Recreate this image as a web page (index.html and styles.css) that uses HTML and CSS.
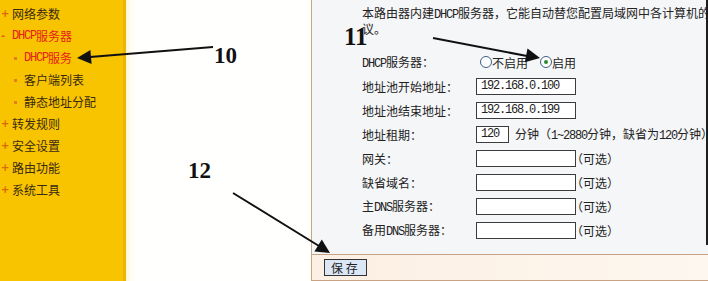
FILE: index.html
```html
<!DOCTYPE html>
<html lang="zh-CN">
<head>
<meta charset="utf-8">
<title>DHCP服务</title>
<link rel="stylesheet" href="styles.css">
</head>
<body>
<div class="page">
  <nav class="sidebar">
    <ul class="menu">
      <li class="item"><span class="mark">+</span>网络参数</li>
      <li class="item red"><span class="mark">-</span><span class="lat">DHCP</span>服务器</li>
      <li class="sub red"><span class="dot"></span><span class="lat">DHCP</span>服务</li>
      <li class="sub"><span class="dot"></span>客户端列表</li>
      <li class="sub"><span class="dot"></span>静态地址分配</li>
      <li class="item"><span class="mark">+</span>转发规则</li>
      <li class="item"><span class="mark">+</span>安全设置</li>
      <li class="item"><span class="mark">+</span>路由功能</li>
      <li class="item"><span class="mark">+</span>系统工具</li>
    </ul>
  </nav>
  <div class="blank"></div>
  <main class="panel">
    <div class="content">
      <div class="intro">
        <div class="line">本路由器内建<span class="lat">DHCP</span>服务器，它能自动替您配置局域网中各计算机的<span class="lat">TCP/IP</span>协</div>
        <div class="line">议。</div>
      </div>
      <div class="form">
        <div class="row">
          <span class="label"><span class="lat">DHCP</span>服务器：</span>
          <span class="radios">
            <span class="radio"></span><span class="rtext">不启用</span>
            <span class="radio checked"></span><span class="rtext">启用</span>
          </span>
        </div>
        <div class="row">
          <span class="label">地址池开始地址：</span>
          <span class="input">192.168.0.100</span>
        </div>
        <div class="row">
          <span class="label">地址池结束地址：</span>
          <span class="input">192.168.0.199</span>
        </div>
        <div class="row">
          <span class="label">地址租期：</span>
          <span class="input short">120</span>
          <span class="note">分钟（<span class="lat">1~2880</span>分钟，缺省为<span class="lat">120</span>分钟）</span>
        </div>
        <div class="row">
          <span class="label">网关：</span>
          <span class="input"></span>
          <span class="opt">（可选）</span>
        </div>
        <div class="row">
          <span class="label">缺省域名：</span>
          <span class="input"></span>
          <span class="opt">（可选）</span>
        </div>
        <div class="row">
          <span class="label">主<span class="lat">DNS</span>服务器：</span>
          <span class="input"></span>
          <span class="opt">（可选）</span>
        </div>
        <div class="row">
          <span class="label">备用<span class="lat">DNS</span>服务器：</span>
          <span class="input"></span>
          <span class="opt">（可选）</span>
        </div>
      </div>
    </div>
    <div class="spacer"></div>
    <div class="footer">
      <span class="button">保 存</span>
    </div>
  </main>

  <svg class="annot" width="708" height="281" viewBox="0 0 708 281">
    <g stroke="#111" stroke-width="2" fill="none">
      <line x1="213" y1="47" x2="90" y2="57"/>
      <line x1="433" y1="38" x2="527" y2="56"/>
      <line x1="233" y1="193" x2="319" y2="246"/>
    </g>
    <g fill="#111">
      <polygon points="77,58 90.4,49.9 91.6,63.9"/>
      <polygon points="540,58 524.9,62.3 527.5,48.5"/>
      <polygon points="330,253 314.4,251.6 321.8,239.6"/>
    </g>
  </svg>
  <span class="num n10">10</span>
  <span class="num n11">11</span>
  <span class="num n12">12</span>
</div>
</body>
</html>
```

FILE: styles.css
```css
* { box-sizing: border-box; }
html, body { margin: 0; padding: 0; }
body {
  width: 708px;
  height: 281px;
  overflow: hidden;
  background: #fffffd;
  font-family: "Noto Sans CJK SC", "Liberation Sans", sans-serif;
  font-size: 12px;
  color: #222;
}
.page {
  position: relative;
  display: grid;
  grid-template-columns: 126px 185px 397px;
  height: 281px;
}
.lat {
  font-family: "Liberation Mono", monospace;
  font-size: 12px;
  letter-spacing: -1.2px;
}

/* sidebar */
.sidebar {
  background: #f8c400;
  border-right: 3px solid #e9b600;
}
.menu {
  list-style: none;
  margin: 0;
  padding: 3px 0 0 0;
}
.menu li {
  height: 22px;
  line-height: 22px;
  color: #3a2a12;
  white-space: nowrap;
  display: flex;
  align-items: center;
}
.menu li.red { color: #e5211b; }
.mark {
  width: 12px;
  font-family: "DejaVu Sans", sans-serif;
  font-weight: bold;
  font-size: 10px;
  color: #d8680a;
  padding-left: 1px;
}
.sub { padding-left: 14px; }
.dot {
  width: 3px;
  height: 3px;
  background: #e0821e;
  margin-right: 7px;
}

/* blank area */
.blank {
  background: linear-gradient(to right, #fff4d0 0, #fffcf0 4px, #fffffd 10px);
}

/* panel */
.panel {
  border-left: 1px solid #caa47c;
  display: flex;
  flex-direction: column;
  overflow: hidden;
  background: #f5f6f8;
}
.content {
  height: 245px;
  border-right: 2px solid #1e1e1e;
  padding: 5px 0 0 50px;
  overflow: hidden;
}
.intro .line {
  line-height: 16px;
  height: 16px;
  white-space: nowrap;
}
.form {
  margin-top: 13px;
}
.row {
  display: flex;
  align-items: center;
  height: 24px;
  white-space: nowrap;
}
.label {
  width: 114px;
  flex: none;
}
.radios {
  display: flex;
  align-items: center;
  margin-left: 4px;
}
.radio {
  width: 12px;
  height: 12px;
  border-radius: 50%;
  border: 1px solid #3d5f86;
  background: #fff;
  position: relative;
}
.radio.checked::after {
  content: "";
  position: absolute;
  left: 3px;
  top: 3px;
  width: 4px;
  height: 4px;
  border-radius: 50%;
  background: #2d8a2d;
}
.rtext { margin-right: 12px; }
.input {
  width: 100px;
  height: 17px;
  border: 1px solid #3c3c3c;
  background: #fff;
  font-family: "Liberation Mono", monospace;
  font-size: 12px;
  letter-spacing: -1.2px;
  line-height: 15px;
  padding-left: 4px;
  flex: none;
}
.input.short { width: 33px; }
.note { margin-left: 6px; }
.opt { margin-left: -5px; }

.spacer { height: 9px; }
.footer {
  flex: 1;
  border-top: 1px solid #c8a282;
  border-bottom: 1px solid #c8a282;
  background: linear-gradient(to right, #fcefe3, #fdf7ef);
  padding: 4px 0 0 12px;
}
.button {
  display: inline-block;
  width: 43px;
  height: 17px;
  border: 1px solid #333;
  background: #dce7f5;
  line-height: 15px;
  padding-left: 6px;
  white-space: pre;
}

/* annotations */
.annot {
  position: absolute;
  left: 0;
  top: 0;
  pointer-events: none;
}
.num {
  position: absolute;
  font-family: "Liberation Serif", serif;
  font-weight: bold;
  line-height: 1;
  color: #111;
}
.n10 { left: 214px; top: 44px; font-size: 23px; }
.n11 { left: 344px; top: 24px; font-size: 25px; }
.n12 { left: 188px; top: 159px; font-size: 23px; }
```
